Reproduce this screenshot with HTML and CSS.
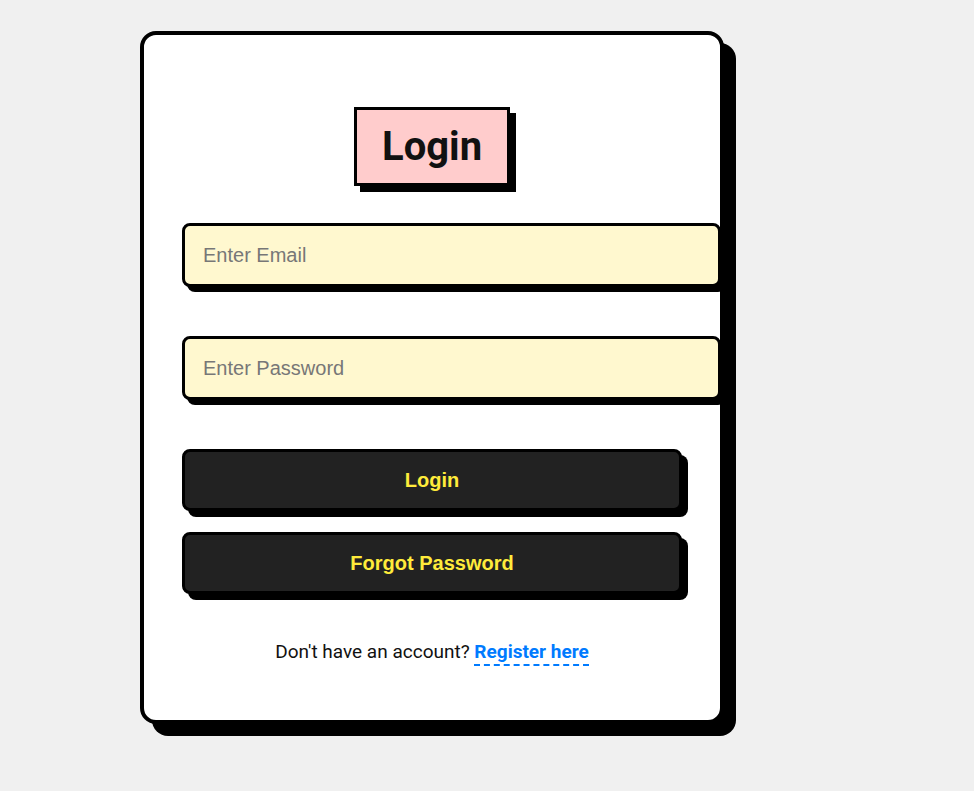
FILE: index.html
```html
<!DOCTYPE html>
<html>
<head>
<meta charset="utf-8">
<link rel="stylesheet" href="styles.css">
</head>
<body>
<div class="card">
  <div class="title-wrap"><h1 class="title">Login</h1></div>
  <form class="form">
    <input class="field" type="email" placeholder="Enter Email">
    <input class="field" type="password" placeholder="Enter Password">
    <button class="btn btn-first" type="button">Login</button>
    <button class="btn" type="button">Forgot Password</button>
  </form>
  <p class="footer">Don't have an account? <a class="link" href="#">Register here</a></p>
</div>
</body>
</html>
```
FILE: styles.css
```css
html, body {
  margin: 0;
  padding: 0;
}
body {
  background: #f0f0f0;
  font-family: Roboto, "Liberation Sans", sans-serif;
  padding: 31px 0 0 140px;
  height: 791px;
  box-sizing: border-box;
}
.card {
  width: 500px;
  height: 609px;
  padding: 38px;
  background: #fff;
  border: 4px solid #000;
  border-radius: 16px;
  box-shadow: 12px 12px 0 #000;
  display: flex;
  flex-direction: column;
}
.title-wrap {
  display: flex;
  justify-content: center;
  margin-top: 34px;
}
.title {
  margin: 0;
  background: #ffcccc;
  border: 3px solid #000;
  box-shadow: 6px 6px 0 #000;
  font-family: Roboto, sans-serif;
  font-weight: 700;
  font-size: 40px;
  line-height: 47px;
  color: #111;
  padding: 13px 25px;
  width: 100px;
  text-align: center;
}
.form {
  display: flex;
  flex-direction: column;
  margin-top: 37px;
}
.field {
  width: 500px;
  box-sizing: content-box;
  height: 26px;
  padding: 16px 15px 16px 18px;
  border: 3px solid #000;
  border-radius: 8px;
  background: #fff8cf;
  box-shadow: 5px 5px 0 #000;
  font-family: "Liberation Sans", Arial, sans-serif;
  font-size: 20px;
  color: #333;
  margin: 0 0 49px 0;
  outline: none;
}
.field::placeholder {
  color: #777;
}
.btn {
  width: 500px;
  height: 62px;
  box-sizing: border-box;
  border: 3px solid #000;
  border-radius: 8px;
  background: #222;
  box-shadow: 6px 6px 0 #000;
  color: #ffeb3b;
  font-family: "Liberation Sans", Arial, sans-serif;
  font-weight: 700;
  font-size: 20px;
  margin: 0;
  padding: 0;
}
.btn-first {
  margin-bottom: 21px;
}
.footer {
  margin: 47px 0 0 0;
  text-align: center;
  font-size: 19px;
  line-height: 22px;
  color: #111;
}
.link {
  color: #007bff;
  font-weight: 700;
  text-decoration: none;
  border-bottom: 2px dashed #007bff;
  padding-bottom: 1px;
}
```
